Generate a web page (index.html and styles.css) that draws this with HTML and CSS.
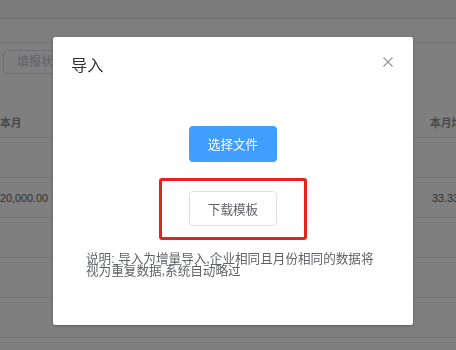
FILE: index.html
```html
<!DOCTYPE html>
<html lang="zh-CN">
<head>
<meta charset="utf-8">
<title>导入</title>
<link rel="stylesheet" href="styles.css">
</head>
<body>
<div class="page">
  <div class="topbar"></div>
  <div class="subbar"></div>
  <div class="filters">
    <div class="select">填报状态</div>
  </div>
  <div class="table">
    <div class="row head">
      <div class="c1">本月</div>
      <div class="c2"></div>
      <div class="c3 hc3">本月增长</div>
    </div>
    <div class="row"><div class="c1"></div><div class="c2"></div><div class="c3"></div></div>
    <div class="row"><div class="c1">20,000.00</div><div class="c2"></div><div class="c3">33.33%</div></div>
    <div class="row"><div class="c1"></div><div class="c2"></div><div class="c3"></div></div>
    <div class="row"><div class="c1"></div><div class="c2"></div><div class="c3"></div></div>
    <div class="row"><div class="c1"></div><div class="c2"></div><div class="c3"></div></div>
  </div>
</div>
<div class="overlay"></div>
<div class="dialog">
  <div class="dialog-header">
    <span class="dialog-title">导入</span>
    <span class="dialog-close" aria-label="关闭">
      <svg width="14" height="14" viewBox="0 0 14 14"><path d="M2.5 2.5 L11.5 11.5 M11.5 2.5 L2.5 11.5" stroke="#909399" stroke-width="1.1" fill="none"/></svg>
    </span>
  </div>
  <div class="dialog-body">
    <button class="btn btn-primary">选择文件</button>
    <div class="highlight">
      <button class="btn btn-default">下载模板</button>
    </div>
    <p class="note">说明: 导入为增量导入,企业相同且月份相同的数据将视为重复数据,系统自动略过</p>
  </div>
</div>
</body>
</html>
```

FILE: styles.css
```css
html, body {
  margin: 0;
  padding: 0;
  width: 456px;
  height: 350px;
  overflow: hidden;
  background: #fff;
  font-family: "Liberation Sans", "Noto Sans CJK SC", sans-serif;
}

.page {
  width: 456px;
  height: 350px;
  overflow: hidden;
  background: #fff;
}

.topbar {
  height: 18px;
  background: #f6f6f6;
  border-bottom: 1px solid #dedede;
}

.subbar {
  height: 23px;
  background: #fdfdfd;
  border-bottom: 1px solid #e6e6e6;
}

.filters {
  height: 54px;
  box-sizing: border-box;
  padding: 7px 0 0 3px;
}

.select {
  width: 150px;
  height: 24px;
  box-sizing: border-box;
  border: 1px solid #dcdfe6;
  border-radius: 4px;
  padding-left: 13px;
  font-size: 12px;
  line-height: 22px;
  color: #c0c4cc;
}

.table {
  font-size: 10.8px;
  color: #606266;
}

.row {
  display: flex;
  height: 40px;
  box-sizing: border-box;
  border-bottom: 1px solid #ebeef5;
  align-items: center;
  white-space: nowrap;
}

.row.head {
  height: 41px;
  padding-top: 9px;
  font-weight: bold;
  color: #909399;
}

.c1 {
  width: 52px;
  overflow: hidden;
}

.c2 {
  width: 366px;
}

.c3 {
  flex: 1;
  overflow: hidden;
  padding-left: 14px;
}

.hc3 {
  padding-left: 12px;
}

.overlay {
  position: fixed;
  inset: 0;
  background: rgba(0, 0, 0, 0.5);
}

.dialog {
  position: fixed;
  left: 53px;
  top: 37px;
  width: 360px;
  height: 288px;
  background: #fff;
  border-radius: 2px;
  box-shadow: 0 1px 3px rgba(0, 0, 0, 0.3);
  font-family: "Liberation Sans", "Noto Sans CJK SC", sans-serif;
}

.dialog-header {
  display: flex;
  justify-content: space-between;
  align-items: flex-start;
  padding: 18px 18px 9px 18px;
}

.dialog-title {
  font-size: 16.2px;
  line-height: 21.6px;
  color: #303133;
}

.dialog-close {
  display: block;
  width: 14px;
  height: 14px;
}

.dialog-close svg {
  display: block;
}

.dialog-body {
  display: flex;
  flex-direction: column;
  align-items: center;
  padding: 40px 33px 0 33px;
}

.btn {
  width: 88px;
  height: 36px;
  box-sizing: border-box;
  border-radius: 3.6px;
  font-family: "Liberation Sans", "Noto Sans CJK SC", sans-serif;
  font-size: 12.6px;
  padding: 0;
  margin: 0;
}

.btn-primary {
  background: #409eff;
  border: 1px solid #409eff;
  color: #fff;
}

.btn-default {
  height: 35px;
  background: #fff;
  border: 1px solid #dcdfe6;
  color: #606266;
}

.highlight {
  margin-top: 16px;
  width: 148px;
  height: 62px;
  box-sizing: border-box;
  border: 3px solid #e5231d;
  border-radius: 3px;
  display: flex;
  justify-content: center;
  padding-top: 10px;
}

.note {
  align-self: stretch;
  margin: 13px 0 0 0;
  font-size: 12.6px;
  line-height: 12.5px;
  color: #606266;
}
```
